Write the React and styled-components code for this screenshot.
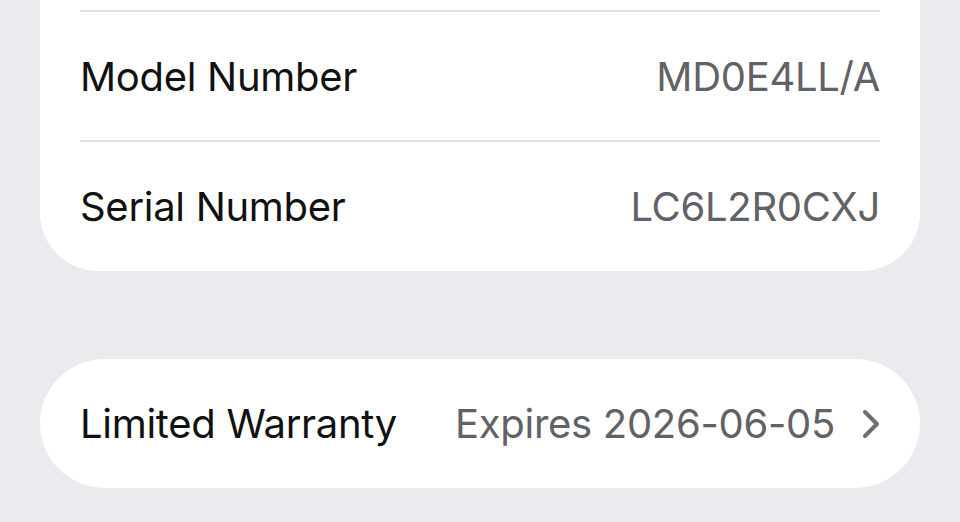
import React from "react";
import styled, { createGlobalStyle } from "styled-components";

const Global = createGlobalStyle`
  html, body {
    margin: 0;
    padding: 0;
    background: #eaeaef;
    overflow: hidden;
  }
  body {
    font-family: Inter, "Noto Sans", "Liberation Sans", sans-serif;
    -webkit-font-smoothing: antialiased;
  }
`;

const Page = styled.div`
  width: 960px;
  height: 522px;
  padding: 0 40px;
  box-sizing: border-box;
  display: flex;
  flex-direction: column;
  gap: 88px;
`;

// top card is scrolled partly out of view, so its top corners are off screen
const Card = styled.div`
  background: #fff;
  border-radius: ${(p) => (p.$flatTop ? "0 0 58px 58px" : "65px")};
  padding: ${(p) => (p.$flatTop ? "10px 40px 0" : "0 40px")};
  display: flex;
  flex-direction: column;
`;

const Row = styled.div`
  height: ${(p) => p.$h || 129}px;
  display: flex;
  align-items: center;
  justify-content: space-between;
  border-top: ${(p) => (p.$first ? "none" : "2px solid #e1e1e5")};
  box-sizing: border-box;
`;

const Label = styled.span`
  font-size: 40px;
  color: #111;
  letter-spacing: -0.3px;
`;

const Value = styled.span`
  font-size: 40px;
  color: #616166;
  letter-spacing: -0.3px;
  display: flex;
  align-items: center;
  gap: 27px;
`;

const Chevron = () => (
  <svg width="18" height="30" viewBox="0 0 18 30" fill="none">
    <polyline
      points="3,3 15,15 3,27"
      stroke="#6e6e73"
      strokeWidth="4"
      strokeLinecap="round"
      strokeLinejoin="round"
    />
  </svg>
);

export default function App() {
  return (
    <>
      <Global />
      <Page>
        <Card $flatTop>
          <Row $h={130}>
            <Label>Model Number</Label>
            <Value>MD0E4LL/A</Value>
          </Row>
          <Row $h={131}>
            <Label>Serial Number</Label>
            <Value>LC6L2R0CXJ</Value>
          </Row>
        </Card>
        <Card>
          <Row $first $h={129}>
            <Label>Limited Warranty</Label>
            <Value>
              Expires 2026-06-05
              <Chevron />
            </Value>
          </Row>
        </Card>
      </Page>
    </>
  );
}
